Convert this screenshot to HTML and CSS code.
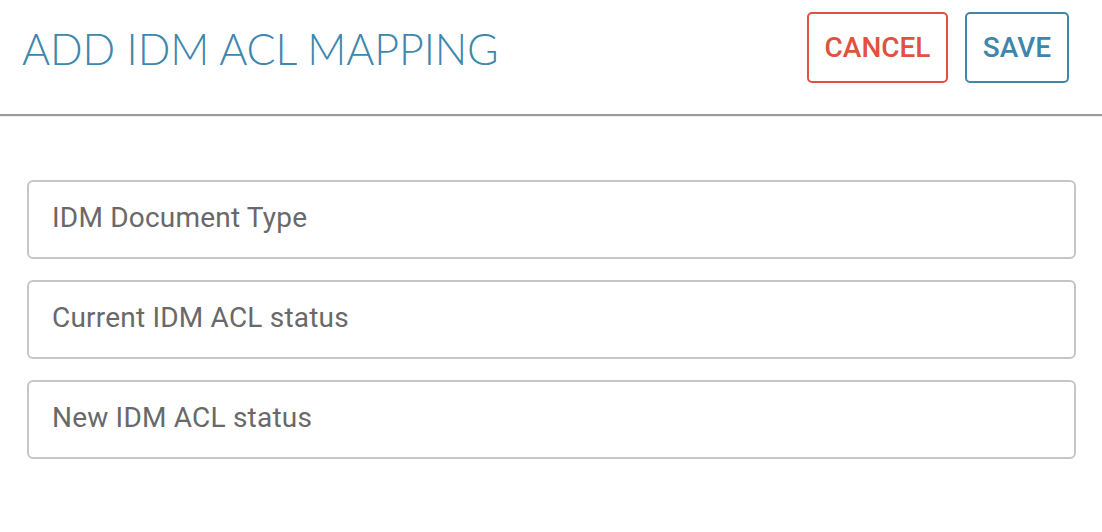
FILE: index.html
```html
<!DOCTYPE html>
<html lang="en">
<head>
<meta charset="utf-8">
<title>Add IDM ACL Mapping</title>
<link rel="stylesheet" href="styles.css">
</head>
<body>
<header class="header">
  <h1 class="title">ADD IDM ACL MAPPING</h1>
  <div class="actions">
    <button class="btn btn-cancel" type="button">CANCEL</button>
    <button class="btn btn-save" type="button">SAVE</button>
  </div>
</header>
<main class="form">
  <input class="field" type="text" placeholder="IDM Document Type">
  <input class="field" type="text" placeholder="Current IDM ACL status">
  <input class="field" type="text" placeholder="New IDM ACL status">
</main>
</body>
</html>
```

FILE: styles.css
```css
* { box-sizing: border-box; }
html, body { margin: 0; padding: 0; background: #fff; }
body { font-family: Roboto, "Liberation Sans", sans-serif; }

.header {
  height: 116px;
  display: flex;
  align-items: flex-start;
  justify-content: space-between;
  padding: 12px 33px 0 22px;
  border-bottom: 2px solid #9b9b9b;
  box-shadow: 0 1px 0 #ececec;
}

.title {
  margin: 0;
  padding-top: 15px;
  font-family: Lato, sans-serif;
  font-weight: 300;
  font-size: 43px;
  line-height: 44px;
  letter-spacing: -0.15px;
  color: #3f87ad;
}

.actions {
  display: flex;
  gap: 17px;
}

.btn {
  height: 71px;
  background: #fff;
  border: 2px solid;
  border-radius: 5px;
  font-family: Roboto, sans-serif;
  font-weight: 500;
  font-size: 28px;
  padding: 0;
  cursor: pointer;
}
.btn-cancel { width: 141px; color: #e0523f; border-color: #e0523f; }
.btn-save { width: 104px; color: #3f86ac; border-color: #3f86ac; }

.form {
  display: flex;
  flex-direction: column;
  gap: 21px;
  padding: 64px 26px 0 27px;
}

.field {
  height: 79px;
  width: 100%;
  border: 2px solid #c6c6c6;
  border-radius: 6px;
  padding: 0 23px 4px;
  font-family: Roboto, sans-serif;
  font-size: 28px;
  letter-spacing: 0.2px;
  color: #666;
  background: #fff;
  outline: none;
}
.field::placeholder { color: #696969; opacity: 1; }
```
